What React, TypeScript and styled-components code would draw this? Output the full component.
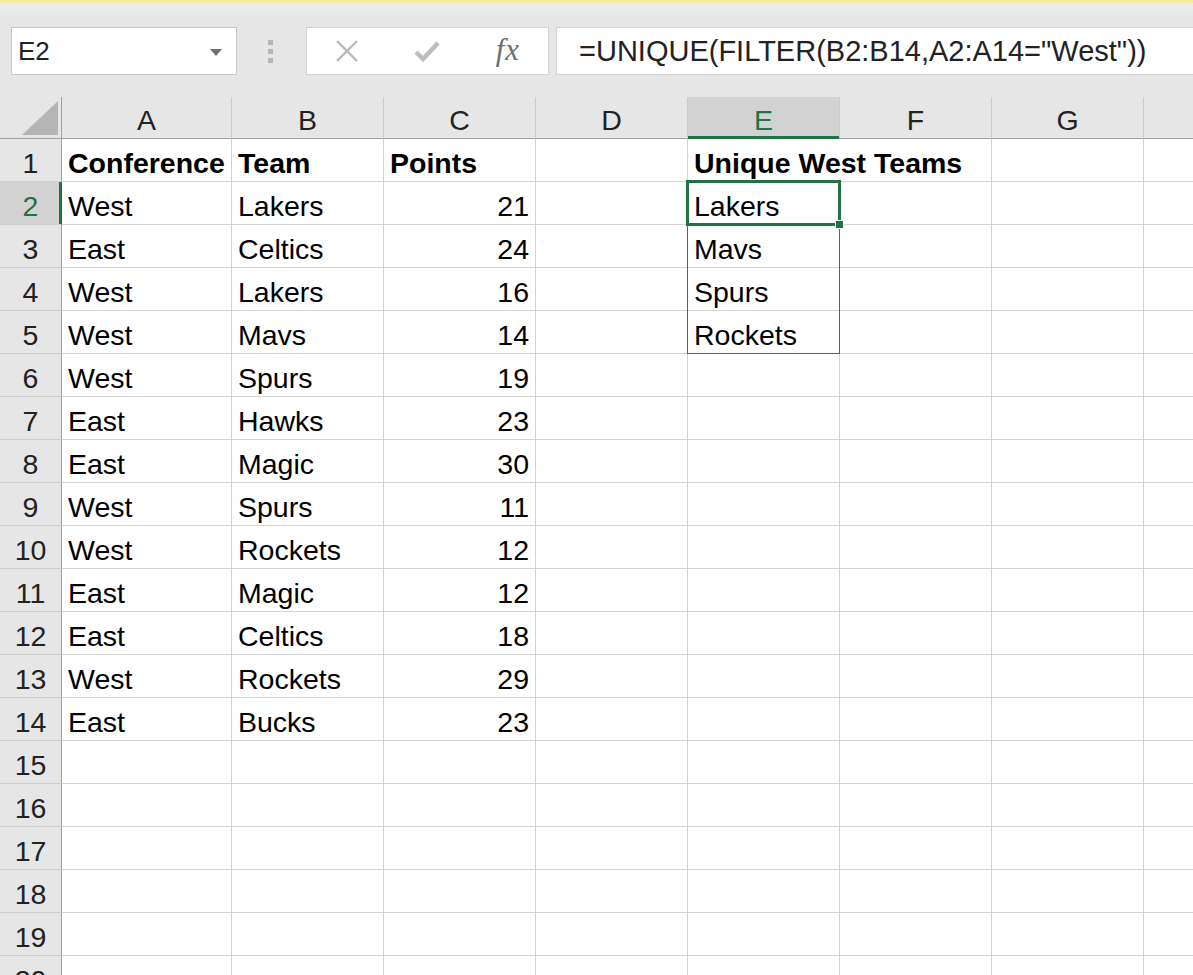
import React from 'react'
import styled, { createGlobalStyle, css } from 'styled-components'

const GREEN = '#217346'
const GRID = '#d4d4d4'
const HEAD_LINE = '#a0a0a0'
const FONT = `"Liberation Sans", Arial, sans-serif`

const GlobalStyle = createGlobalStyle`
    html, body {
        margin: 0;
        padding: 0;
        background: #ffffff;
        overflow: hidden;
        font-family: ${FONT};
        color: #1a1a1a;
    }
`

const Page = styled.div`
    width: 1193px;
    height: 975px;
    overflow: hidden;
`

/* ---------- formula bar ---------- */

const Toolbar = styled.div`
    box-sizing: border-box;
    height: 97px;
    border-top: 3px solid #f2ed9f;
    background: linear-gradient(180deg, #ececec 0px, #e6e6e6 18px);
    display: flex;
    align-items: flex-start;
    padding: 24px 0 0 11px;
`

const NameBox = styled.div`
    box-sizing: border-box;
    width: 226px;
    height: 48px;
    background: #fff;
    border: 1px solid #c8c8c8;
    display: flex;
    align-items: center;
    justify-content: space-between;
    padding: 0 14px 0 6px;
    font-size: 26px;
    color: #222;
`

const DropArrow = styled.span`
    width: 0;
    height: 0;
    border-left: 6px solid transparent;
    border-right: 6px solid transparent;
    border-top: 7px solid #707070;
    margin-top: 2px;
`

const Grip = styled.div`
    display: flex;
    flex-direction: column;
    gap: 4px;
    margin: 13px 33px 0 31px;
`

const GripDot = styled.span`
    width: 5px;
    height: 5px;
    background: #b4b4b4;
`

const ButtonBox = styled.div`
    box-sizing: border-box;
    width: 243px;
    height: 48px;
    background: #fff;
    border: 1px solid #d2d2d2;
    display: grid;
    grid-template-columns: repeat(3, 1fr);
    align-items: center;
    justify-items: center;
`

const FxLabel = styled.span`
    font-family: "Liberation Serif", "Times New Roman", serif;
    font-style: italic;
    font-size: 31px;
    color: #6e6e6e;
    margin-top: -2px;
    letter-spacing: 1px;
`

const FormulaBox = styled.div`
    box-sizing: border-box;
    flex: 1;
    height: 48px;
    margin: 0 -2px 0 7px;
    background: #fff;
    border: 1px solid #d2d2d2;
    display: flex;
    align-items: center;
    padding-left: 22px;
    font-size: 29px;
    color: #222;
    white-space: nowrap;
    overflow: hidden;
`

/* ---------- sheet ---------- */

const COL_WIDTHS = [170, 152, 152, 152, 152, 152, 152, 152]
const ROW_HEAD_W = 62
const HEAD_H = 42
const ROW_H = 43
const LETTERS = ['A', 'B', 'C', 'D', 'E', 'F', 'G', '']

const Sheet = styled.div`
    position: relative;
    display: grid;
    grid-template-columns: ${ROW_HEAD_W}px ${COL_WIDTHS.map(w => `${w}px`).join(' ')};
    grid-template-rows: ${HEAD_H}px;
    grid-auto-rows: ${ROW_H}px;
    background: #fff;
    font-size: 28.5px;
`

const headBase = css`
    box-sizing: border-box;
    background: #e6e6e6;
    display: flex;
    align-items: flex-end;
    justify-content: center;
    color: #222;
    padding-bottom: 1px;
`

const Corner = styled.div`
    ${headBase};
    border-right: 1px solid ${HEAD_LINE};
    border-bottom: 1px solid ${HEAD_LINE};
    justify-content: flex-end;
    padding: 0 3px 3px 0;
`

const SelectAll = styled.span`
    width: 36px;
    height: 34px;
    background: #b4b4b4;
    clip-path: polygon(100% 0, 100% 100%, 0 100%);
`

const ColHead = styled.div<{ $active?: boolean }>`
    ${headBase};
    border-right: 1px solid #cacaca;
    border-bottom: 1px solid ${HEAD_LINE};
    ${p => p.$active && css`
        background: #d2d2d2;
        color: ${GREEN};
        border-bottom-color: ${GREEN};
        box-shadow: inset 0 -2px 0 ${GREEN};
    `}
`

const RowHead = styled.div<{ $active?: boolean }>`
    ${headBase};
    border-right: 1px solid ${HEAD_LINE};
    border-bottom: 1px solid #cfcfcf;
    ${p => p.$active && css`
        background: #d2d2d2;
        color: ${GREEN};
        border-right-color: ${GREEN};
        box-shadow: inset -2px 0 0 ${GREEN};
    `}
`

const Cell = styled.div<{ $align?: 'left' | 'right'; $bold?: boolean; $spills?: boolean }>`
    box-sizing: border-box;
    display: flex;
    align-items: flex-end;
    justify-content: ${p => (p.$align === 'right' ? 'flex-end' : 'flex-start')};
    padding: 0 6px 1px;
    border-right: 1px solid ${p => (p.$spills ? 'transparent' : GRID)};
    border-bottom: 1px solid ${GRID};
    white-space: nowrap;
    overflow: visible;
    font-weight: ${p => (p.$bold ? 700 : 400)};
    color: #000;
    position: relative;
    z-index: ${p => (p.$spills ? 1 : 0)};
`

const SpillRange = styled.div<{ $left: number; $top: number; $w: number; $h: number }>`
    position: absolute;
    box-sizing: border-box;
    left: ${p => p.$left}px;
    top: ${p => p.$top}px;
    width: ${p => p.$w}px;
    height: ${p => p.$h}px;
    border: 1px solid #3a63b4;
    pointer-events: none;
    z-index: 2;
`

const ActiveCell = styled.div<{ $left: number; $top: number; $w: number; $h: number }>`
    position: absolute;
    box-sizing: border-box;
    left: ${p => p.$left}px;
    top: ${p => p.$top}px;
    width: ${p => p.$w}px;
    height: ${p => p.$h}px;
    border: 3px solid ${GREEN};
    pointer-events: none;
    z-index: 3;
`

const FillHandle = styled.span`
    position: absolute;
    right: -6px;
    bottom: -6px;
    width: 7px;
    height: 7px;
    background: ${GREEN};
    border: 1px solid #fff;
`

type Row = { a?: string; b?: string; c?: string; e?: string; bold?: boolean }

const rows: Row[] = [
    { a: 'Conference', b: 'Team', c: 'Points', e: 'Unique West Teams', bold: true },
    { a: 'West', b: 'Lakers', c: '21', e: 'Lakers' },
    { a: 'East', b: 'Celtics', c: '24', e: 'Mavs' },
    { a: 'West', b: 'Lakers', c: '16', e: 'Spurs' },
    { a: 'West', b: 'Mavs', c: '14', e: 'Rockets' },
    { a: 'West', b: 'Spurs', c: '19' },
    { a: 'East', b: 'Hawks', c: '23' },
    { a: 'East', b: 'Magic', c: '30' },
    { a: 'West', b: 'Spurs', c: '11' },
    { a: 'West', b: 'Rockets', c: '12' },
    { a: 'East', b: 'Magic', c: '12' },
    { a: 'East', b: 'Celtics', c: '18' },
    { a: 'West', b: 'Rockets', c: '29' },
    { a: 'East', b: 'Bucks', c: '23' },
    {}, {}, {}, {}, {}, {},
]

const colLeft = (i: number) => ROW_HEAD_W + COL_WIDTHS.slice(0, i).reduce((s, w) => s + w, 0)
const rowTop = (r: number) => HEAD_H + (r - 1) * ROW_H

const XIcon = () => (
    <svg width="24" height="22" viewBox="0 0 24 22">
        <path d="M2 1 L22 21 M22 1 L2 21" stroke="#b9b9b9" strokeWidth="2.4" fill="none" />
    </svg>
)

const CheckIcon = () => (
    <svg width="26" height="22" viewBox="0 0 26 22">
        <path d="M2 12 L9 19 L24 3" stroke="#bdbdbd" strokeWidth="4.5" fill="none" />
    </svg>
)

const App = () => {
    const activeCol = 4
    const activeRow = 2
    return (
        <Page>
            <GlobalStyle />
            <Toolbar>
                <NameBox>
                    E2
                    <DropArrow />
                </NameBox>
                <Grip>
                    <GripDot />
                    <GripDot />
                    <GripDot />
                </Grip>
                <ButtonBox>
                    <XIcon />
                    <CheckIcon />
                    <FxLabel>fx</FxLabel>
                </ButtonBox>
                <FormulaBox>=UNIQUE(FILTER(B2:B14,A2:A14="West"))</FormulaBox>
            </Toolbar>

            <Sheet>
                <Corner>
                    <SelectAll />
                </Corner>
                {LETTERS.map((l, i) => (
                    <ColHead key={i} $active={i === activeCol}>{l}</ColHead>
                ))}
                {rows.map((row, r) => {
                    const n = r + 1
                    return (
                        <React.Fragment key={n}>
                            <RowHead $active={n === activeRow}>{n}</RowHead>
                            <Cell $bold={row.bold}>{row.a}</Cell>
                            <Cell $bold={row.bold}>{row.b}</Cell>
                            <Cell $bold={row.bold} $align={row.bold ? 'left' : 'right'}>{row.c}</Cell>
                            <Cell />
                            <Cell $bold={row.bold} $spills={n === 1}>{row.e}</Cell>
                            <Cell />
                            <Cell />
                            <Cell />
                        </React.Fragment>
                    )
                })}
                <SpillRange
                    $left={colLeft(activeCol) - 1}
                    $top={rowTop(activeRow) - 1}
                    $w={COL_WIDTHS[activeCol] + 1}
                    $h={ROW_H * 4 + 1}
                />
                <ActiveCell
                    $left={colLeft(activeCol) - 2}
                    $top={rowTop(activeRow) - 2}
                    $w={COL_WIDTHS[activeCol] + 3}
                    $h={ROW_H + 3}
                >
                    <FillHandle />
                </ActiveCell>
            </Sheet>
        </Page>
    )
}

export default App
